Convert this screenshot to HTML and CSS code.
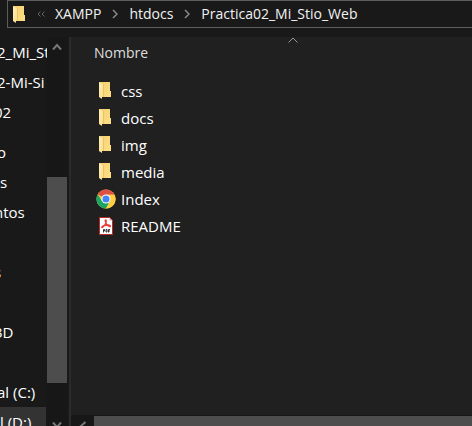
FILE: index.html
```html
<!DOCTYPE html>
<html lang="es">
<head>
<meta charset="utf-8">
<title>Practica02_Mi_Stio_Web</title>
<link rel="stylesheet" href="styles.css">
</head>
<body>
<svg class="defs" aria-hidden="true">
  <defs>
    <linearGradient id="back" x1="0" y1="0" x2="1" y2="1"><stop offset="0" stop-color="#f3d070"/><stop offset="1" stop-color="#ffdf87"/></linearGradient>
    <linearGradient id="flap" x1="0" y1="0" x2="1" y2="1"><stop offset="0" stop-color="#ffefb8"/><stop offset="1" stop-color="#fbdc8a"/></linearGradient>
    <symbol id="folder" viewBox="0 0 12 17">
      <path fill="url(#back)" d="M0 0h11v9h1v6H3z"/>
      <path fill="#ebc362" d="M4 2h1v13H4z"/>
      <path fill="url(#flap)" d="M0 0l4 2.500V14l-1 1v2L0 15z"/>
    </symbol>
  </defs>
</svg>
<header class="top">
  <nav class="address" aria-label="Ruta">
    <svg class="folder"><use href="#folder"/></svg>
    <svg class="more" viewBox="0 0 8 6"><path d="M3.500 .5L1 3l2.500 2.500M7.500 .5L5 3l2.500 2.500"/></svg>
    <a href="#">XAMPP</a>
    <svg class="sep" viewBox="0 0 6 10"><path d="M1 1l4 4-4 4"/></svg>
    <a href="#">htdocs</a>
    <svg class="sep" viewBox="0 0 6 10"><path d="M1 1l4 4-4 4"/></svg>
    <a href="#">Practica02_Mi_Stio_Web</a>
  </nav>
</header>
<div class="window">
  <aside class="side">
    <ul class="tree">
      <li>2_Mi_St</li>
      <li>2-Mi-Si</li>
      <li class="deep">02</li>
      <li class="group">o</li>
      <li class="flush">s</li>
      <li class="deep">ntos</li>
      <li></li>
      <li class="deep">s</li>
      <li></li>
      <li class="deep">3D</li>
      <li></li>
      <li>al (C:)</li>
      <li class="flush current">l (D:)</li>
    </ul>
    <div class="vbar">
      <button aria-label="Subir"><svg viewBox="0 0 10 8"><path d="M1 6.500L5 2l4 4.500"/></svg></button>
      <div class="thumb"></div>
      <button aria-label="Bajar"><svg viewBox="0 0 10 8"><path d="M1 1.500L5 6l4-4.500"/></svg></button>
    </div>
  </aside>
  <main class="files">
    <svg class="sort" viewBox="0 0 10 6"><path d="M.5 5.500L5 1l4.500 4.500"/></svg>
    <table>
      <thead><tr><th>Nombre</th></tr></thead>
      <tbody>
        <tr><td><div class="item"><span class="icon"><svg class="folder"><use href="#folder"/></svg></span>css</div></td></tr>
        <tr><td><div class="item"><span class="icon"><svg class="folder"><use href="#folder"/></svg></span>docs</div></td></tr>
        <tr><td><div class="item"><span class="icon"><svg class="folder"><use href="#folder"/></svg></span>img</div></td></tr>
        <tr><td><div class="item"><span class="icon"><svg class="folder"><use href="#folder"/></svg></span>media</div></td></tr>
        <tr><td><div class="item"><span class="icon"><svg class="chrome" viewBox="0 0 48 48">
          <circle cx="24" cy="24" r="23" fill="#ffce43"/>
          <path fill="#dd5144" d="M24 24L4.080 12.500A23 23 0 0 1 43.920 12.500L44 13.500H24z"/>
          <path fill="#1da462" d="M4.080 12.500A23 23 0 0 0 24 47L33.500 29.500 24 24l-9.500 5.500z"/>
          <path fill="#ffce43" d="M24 13.500h20.500A23 23 0 0 1 24 47l9.500-17.500z"/>
          <circle cx="24" cy="24" r="11" fill="#fff"/><circle cx="24" cy="24" r="8.500" fill="#4285f4"/>
        </svg></span>Index</div></td></tr>
        <tr><td><div class="item"><span class="icon"><svg class="pdf" viewBox="0 0 16 18">
          <path fill="#fff" stroke="#b52b27" d="M1.500 .5h10l3 3v14h-13z"/>
          <path fill="#e9a29f" d="M11.500 .5v3h3z"/>
          <path fill="none" stroke="#ed3b39" stroke-width="1.300" d="M7.500 3c1.500 0 .5 3.500-1 5.500C5.500 10 4 11 3.700 10.300 3.500 9.200 7.500 8 10 8c2 0 3 .8 2.300 1.400C11.300 10 8.800 8 7.900 6 7.200 4.300 7 3 7.500 3z"/>
          <path fill="none" stroke="#333" d="M5.500 15.500v-3h1v1.500h-1M8 12.500h1v2.500H8zM10.500 15.500v-3h1.500M10.500 14H12"/>
        </svg></span>README</div></td></tr>
      </tbody>
    </table>
    <div class="hbar">
      <button aria-label="Izquierda"><svg viewBox="0 0 8 10"><path d="M6.500 1L2 5l4.500 4"/></svg></button>
      <div class="thumb"></div>
    </div>
  </main>
</div>
</body>
</html>
```
FILE: styles.css
```css
* { box-sizing: border-box; }
body {
  margin: 0;
  height: 100vh;
  overflow: hidden;
  display: flex;
  flex-direction: column;
  background: #191919;
  color: #fff;
  font: 15px/20px "Open Sans", "Noto Sans", sans-serif;
}
svg { display: block; flex: none; fill: none; }
.defs { position: absolute; width: 0; height: 0; }
.folder { width: 12px; height: 17px; }
button { border: 0; padding: 0; background: none; display: flex; align-items: center; justify-content: center; }

.top { flex: none; height: 37px; padding-left: 7px; }
.address {
  height: 28px;
  display: flex;
  align-items: center;
  border: 1px solid #5c5c5c;
  border-right: 0;
  padding-left: 5px;
  font-size: 14px;
}
.address a { color: #f2f2f2; text-decoration: none; white-space: nowrap; }
.more { width: 8px; height: 6px; margin: 0 10px 0 12px; stroke: #666; }
.sep { width: 6px; height: 10px; margin: 0 11px; stroke: #8a8a8a; stroke-width: 1.5; }

.window { flex: 1; min-height: 0; display: flex; }
.side { flex: none; width: 71px; display: flex; border-right: 2px solid #2b2b2b; }
.tree { flex: 1; min-width: 0; margin: 0; padding: 0; list-style: none; overflow: hidden; }
.tree li { height: 30px; line-height: 30px; text-indent: -3px; white-space: nowrap; overflow: hidden; }
.tree .group { margin-top: 10px; }
.tree .deep { text-indent: -6px; }
.tree .flush { text-indent: 0; }
.tree .current { background: #333; margin-right: 1px; }
.vbar { flex: none; width: 20px; margin-right: 2px; display: flex; flex-direction: column; background: #171717; }
.vbar button { flex: none; height: 20px; }
.vbar .thumb { flex: none; height: 206px; margin-top: 120px; }
.vbar button:last-child { margin-top: 32px; }
.vbar svg { width: 10px; height: 8px; }
.vbar path, .hbar path { stroke: #777; stroke-width: 2; }
.thumb { background: #4d4d4d; }

.files { flex: 1; min-width: 0; display: flex; flex-direction: column; background: #202020; }
.sort { width: 10px; height: 6px; align-self: center; margin-left: 42px; stroke: #999; }
table { border-collapse: collapse; width: 100%; }
th { padding: 0 23px; height: 20px; text-align: left; font-size: 14px; font-weight: 400; color: #dedede; }
thead::after { content: ""; display: block; height: 14px; }
td { padding: 0 23px; height: 27px; }
.item { display: flex; align-items: center; }
.icon { width: 27px; display: flex; padding-left: 2px; }
.item .folder { margin-left: 3px; }
.chrome { width: 20px; height: 20px; }
.pdf { width: 16px; height: 18px; margin-left: 2px; }
.hbar { margin-top: auto; height: 11px; display: flex; border-top: 1px solid #171717; background: #171717; overflow: hidden; }
.hbar button { flex: none; width: 23px; height: 20px; }
.hbar svg { width: 8px; height: 10px; }
.hbar .thumb { flex: 1; }
```
